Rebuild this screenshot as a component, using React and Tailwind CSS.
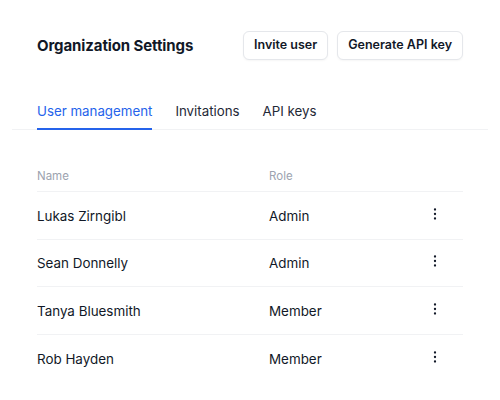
import { useState } from "react";

const users = [
    { name: "Lukas Zirngibl", role: "Admin" },
    { name: "Sean Donnelly", role: "Admin" },
    { name: "Tanya Bluesmith", role: "Member" },
    { name: "Rob Hayden", role: "Member" },
];

const tabs = ["User management", "Invitations", "API keys"];

const Kebab = () => (
    <svg width="16" height="16" viewBox="0 0 16 16" fill="currentColor">
        <circle cx="8" cy="3.5" r="1.15" />
        <circle cx="8" cy="8" r="1.15" />
        <circle cx="8" cy="12.5" r="1.15" />
    </svg>
);

const App = () => {
    const [activeTab, setActiveTab] = useState(0);

    return (
        <div className="w-[500px] h-[400px] bg-white px-3 pt-[31px] text-[#111827] font-['Inter','Liberation_Sans',sans-serif]">
            {/* Header */}
            <div className="flex items-center justify-between px-[25px]">
                <h1 className="text-[15px] font-bold tracking-[-0.1px] pt-[1px]">Organization Settings</h1>
                <div className="flex gap-[9px]">
                    <button className="h-[29px] px-[10px] rounded-md border border-[#e5e7eb] bg-white text-[12.5px] font-semibold shadow-[0_1px_2px_rgba(0,0,0,0.04)]">
                        Invite user
                    </button>
                    <button className="h-[29px] px-[10px] rounded-md border border-[#e5e7eb] bg-white text-[12.5px] font-semibold shadow-[0_1px_2px_rgba(0,0,0,0.04)]">
                        Generate API key
                    </button>
                </div>
            </div>

            {/* Tabs */}
            <div className="mt-[42px] border-b border-[#f1f2f4]">
                <div className="flex gap-[23px] px-[25px]">
                    {tabs.map((tab, i) => (
                        <button
                            key={tab}
                            onClick={() => setActiveTab(i)}
                            className={
                                i === activeTab
                                    ? "pb-[6px] -mb-px border-b-2 border-[#2563eb] text-[13.3px] text-[#2563eb]"
                                    : "pb-[6px] -mb-px border-b-2 border-transparent text-[13.3px] text-[#1f2937]"
                            }
                        >
                            {tab}
                        </button>
                    ))}
                </div>
            </div>

            {/* Table */}
            <div className="px-[25px] mt-[38px]">
                <div className="grid grid-cols-[232px_1fr_40px] pb-[6px] border-b border-[#f1f2f4] text-[11.5px] text-[#9ca3af]">
                    <span>Name</span>
                    <span>Role</span>
                    <span></span>
                </div>
                {users.map((u, i) => (
                    <div
                        key={u.name}
                        className={
                            i === users.length - 1
                                ? "grid grid-cols-[232px_1fr_40px] items-center h-[47.5px] pt-[1px] text-[13.4px]"
                                : "grid grid-cols-[232px_1fr_40px] items-center h-[47.5px] pt-[1px] text-[13.4px] border-b border-[#f1f2f4]"
                        }
                    >
                        <span>{u.name}</span>
                        <span>{u.role}</span>
                        <span className="flex justify-start pl-[4px] -mt-[4px]">
                            <Kebab />
                        </span>
                    </div>
                ))}
            </div>
        </div>
    );
};

export default App;
